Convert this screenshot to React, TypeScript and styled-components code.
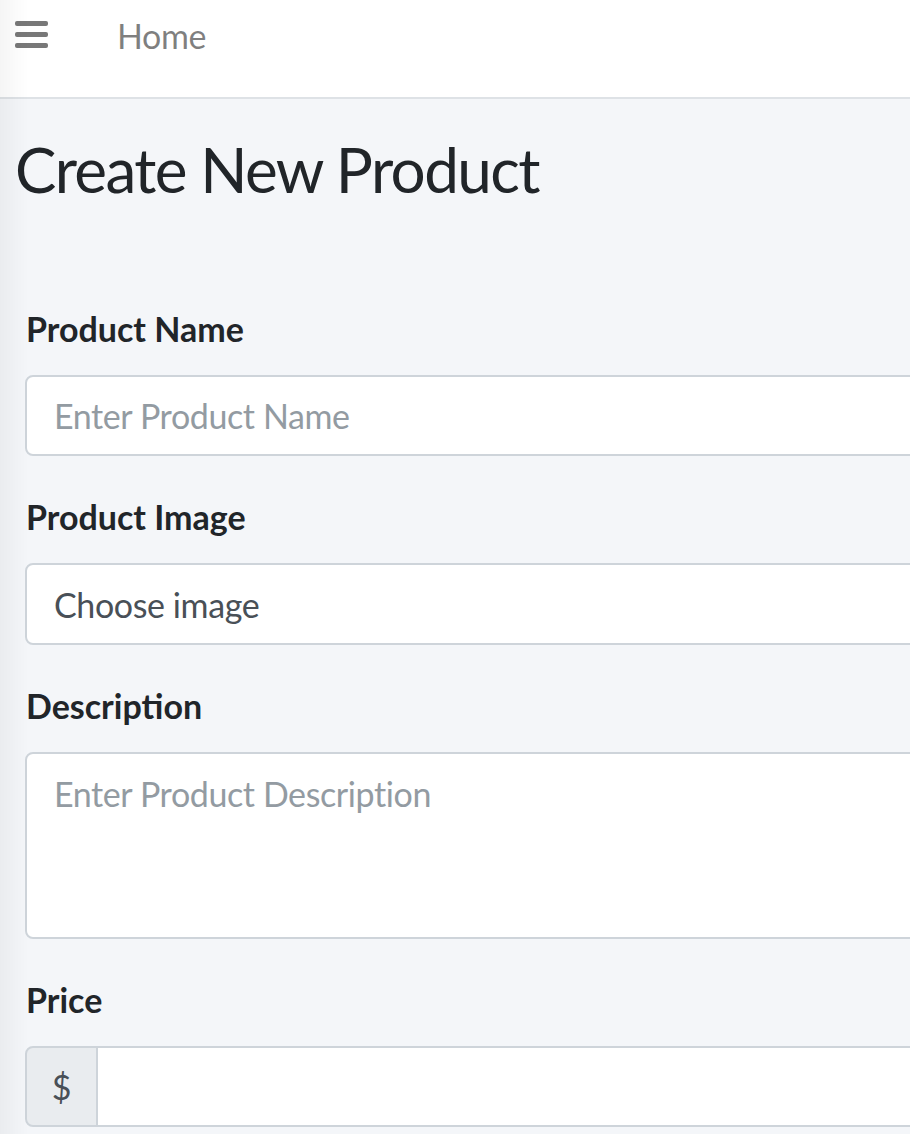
import React from "react";
import styled, { createGlobalStyle } from "styled-components";

const GlobalStyle = createGlobalStyle`
  html, body {
    margin: 0;
    padding: 0;
    background: #f4f6f9;
    overflow: hidden;
  }
  body {
    font-family: Lato, "Noto Sans", sans-serif;
    color: #212529;
  }
  * { box-sizing: border-box; }
`;

const Page = styled.div`
  min-height: 1134px;
  background: #f4f6f9;
  position: relative;
`;

const EdgeShade = styled.div`
  position: fixed;
  left: 0;
  top: 0;
  bottom: 0;
  width: 28px;
  pointer-events: none;
  background: linear-gradient(to right, rgba(0, 0, 0, 0.04), rgba(0, 0, 0, 0));
`;

const Navbar = styled.nav`
  height: 99px;
  background: #ffffff;
  border-bottom: 2px solid #dee2e6;
  display: flex;
  align-items: flex-start;
  padding: 15px 0 0 15px;
  gap: 69px;
`;

const MenuButton = styled.button`
  border: 0;
  background: transparent;
  padding: 0;
  margin-top: 6px;
  display: flex;
  cursor: pointer;
`;

const NavLink = styled.a`
  display: block;
  font-size: 34px;
  line-height: 41px;
  color: rgba(0, 0, 0, 0.5);
  text-decoration: none;
  letter-spacing: -0.4px;
`;

const Content = styled.main`
  padding: 32px 0 0 15px;
`;

const Title = styled.h1`
  margin: 0;
  font-size: 62px;
  font-weight: 400;
  line-height: 76px;
  letter-spacing: -1.6px;
  color: #212529;
`;

const Form = styled.form`
  width: 1000px;
  margin-top: 96px;
  padding-left: 10px;
  display: flex;
  flex-direction: column;
`;

const FormGroup = styled.div`
  display: flex;
  flex-direction: column;
  margin-bottom: 35px;
`;

const Label = styled.label`
  font-size: 34px;
  font-weight: 700;
  line-height: 52px;
  margin-bottom: 20px;
  padding-left: 1px;
  color: #212529;
`;

const fieldBase = `
  width: 100%;
  font-family: Lato, "Noto Sans", sans-serif;
  font-size: 34px;
  letter-spacing: -0.4px;
  color: #495057;
  background: #ffffff;
  border: 2px solid #ced4da;
  border-radius: 8px;
  outline: none;
  &::placeholder { color: #939ba2; }
`;

const TextInput = styled.input`
  ${fieldBase}
  height: 81px;
  padding: 0 27px;
`;

const FileBox = styled.div`
  ${fieldBase}
  height: 82px;
  padding: 0 27px;
  display: flex;
  align-items: center;
`;

const TextArea = styled.textarea`
  ${fieldBase}
  height: 187px;
  padding: 14px 27px;
  line-height: 51px;
  resize: none;
`;

const InputGroup = styled.div`
  display: flex;
  height: 81px;
`;

const Prepend = styled.span`
  width: 73px;
  flex: none;
  display: flex;
  align-items: center;
  justify-content: center;
  font-size: 34px;
  color: #495057;
  background: #e9ecef;
  border: 2px solid #ced4da;
  border-radius: 8px 0 0 8px;
`;

const GroupInput = styled.input`
  ${fieldBase}
  flex: 1;
  border-left: 0;
  border-radius: 0 8px 8px 0;
  padding: 0 27px;
`;

const Hamburger = () => (
  <svg width="33" height="28" viewBox="0 0 33 28" aria-hidden="true">
    <rect x="0" y="0" width="33" height="5" rx="2" fill="#787878" />
    <rect x="0" y="11" width="33" height="5" rx="2" fill="#787878" />
    <rect x="0" y="22" width="33" height="5" rx="2" fill="#787878" />
  </svg>
);

export default function App() {
  return (
    <>
      <GlobalStyle />
      <Page>
        <Navbar>
          <MenuButton type="button" aria-label="Toggle menu">
            <Hamburger />
          </MenuButton>
          <NavLink href="#">Home</NavLink>
        </Navbar>
        <Content>
          <Title>Create New Product</Title>
          <Form onSubmit={(e) => e.preventDefault()}>
            <FormGroup>
              <Label htmlFor="name">Product Name</Label>
              <TextInput id="name" placeholder="Enter Product Name" />
            </FormGroup>
            <FormGroup>
              <Label htmlFor="image">Product Image</Label>
              <FileBox>Choose image</FileBox>
            </FormGroup>
            <FormGroup>
              <Label htmlFor="desc">Description</Label>
              <TextArea id="desc" placeholder="Enter Product Description" />
            </FormGroup>
            <FormGroup>
              <Label htmlFor="price">Price</Label>
              <InputGroup>
                <Prepend>$</Prepend>
                <GroupInput id="price" />
              </InputGroup>
            </FormGroup>
          </Form>
        </Content>
        <EdgeShade />
      </Page>
    </>
  );
}
